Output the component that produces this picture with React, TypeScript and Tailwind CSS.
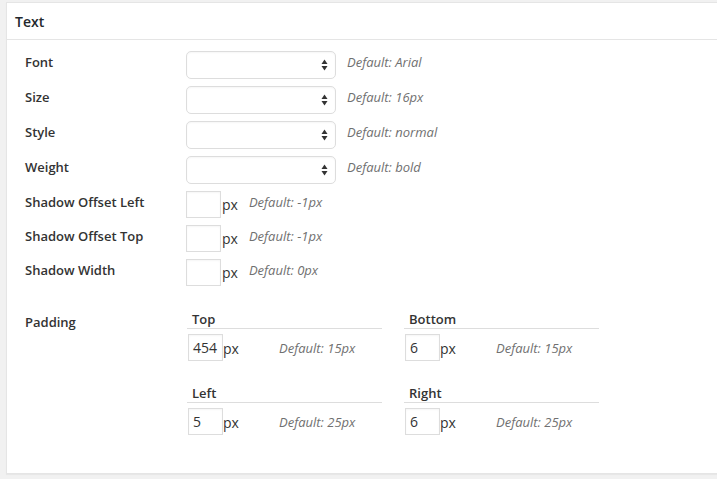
const font = { fontFamily: '"Open Sans", "Liberation Sans", sans-serif' };

function Arrows() {
  return (
    <svg width="7" height="12" viewBox="0 0 7 12" className="text-[#333]">
      <path d="M3.5 0.5 L6.5 5 L0.5 5 Z" fill="currentColor" />
      <path d="M3.5 11.5 L6.5 7 L0.5 7 Z" fill="currentColor" />
    </svg>
  );
}

function Hint({ children }: { children: string }) {
  return <span className="block text-[13px] italic text-[#707070] leading-[20px]">{children}</span>;
}

function SelectRow({ label, hint }: { label: string; hint: string }) {
  return (
    <div className="flex items-start mb-[7px]">
      <div className="w-[161px] pt-[1px] text-[13px] font-semibold text-[#333] leading-[20px]">{label}</div>
      <div className="w-[150px] h-[28px] border border-[#ddd] rounded-[5px] bg-white flex items-center justify-end pr-[7px] shadow-[inset_0_1px_2px_rgba(0,0,0,0.04)]">
        <Arrows />
      </div>
      <div className="ml-[11px] pt-[1px]">
        <Hint>{hint}</Hint>
      </div>
    </div>
  );
}

function PxRow({ label, hint }: { label: string; hint: string }) {
  return (
    <div className="flex items-start mb-[7px]">
      <div className="w-[161px] pt-[1px] text-[13px] font-semibold text-[#333] leading-[20px]">{label}</div>
      <div className="w-[35px] h-[27px] border border-[#ddd] bg-white shadow-[inset_0_1px_2px_rgba(0,0,0,0.04)]" />
      <span className="block ml-[1px] pt-[4px] text-[14px] text-[#333] leading-[20px]">px</span>
      <div className="ml-[11px] pt-[1px]">
        <Hint>{hint}</Hint>
      </div>
    </div>
  );
}

function PadField({ label, value, hint }: { label: string; value: string; hint: string }) {
  return (
    <div className="w-[195px]">
      <div className="h-[20px] border-b border-[#ddd] pl-[5px] text-[13px] font-semibold text-[#333] leading-[20px]">{label}</div>
      <div className="flex items-center mt-[5px]">
        <div className="w-[92px] flex items-center pl-[1px]">
          <div className="w-[35px] h-[27px] border border-[#ddd] bg-white pl-[4px] text-[14px] text-[#333] leading-[25px] shadow-[inset_0_1px_2px_rgba(0,0,0,0.04)]">
            {value}
          </div>
          <span className="block pt-[3px] text-[14px] text-[#333] leading-[20px]">px</span>
        </div>
        <Hint>{hint}</Hint>
      </div>
    </div>
  );
}

export default function App() {
  return (
    <div className="w-[717px] h-[479px] overflow-hidden bg-[#f1f1f1] pt-[2px] pl-[6px]" style={font}>
      <div className="w-[730px] h-[472px] bg-white border border-[#e5e5e5] shadow-[0_1px_1px_rgba(0,0,0,0.04)]">
        <div className="h-[37px] border-b border-[#e5e5e5] pl-[8px] flex items-center text-[14px] font-semibold text-[#23282d]">
          Text
        </div>
        <div className="pl-[18px] pt-[11px]">
          <SelectRow label="Font" hint="Default: Arial" />
          <SelectRow label="Size" hint="Default: 16px" />
          <SelectRow label="Style" hint="Default: normal" />
          <SelectRow label="Weight" hint="Default: bold" />
          <PxRow label="Shadow Offset Left" hint="Default: -1px" />
          <PxRow label="Shadow Offset Top" hint="Default: -1px" />
          <PxRow label="Shadow Width" hint="Default: 0px" />
          <div className="flex items-start mt-[23px]">
            <div className="w-[162px] pt-[3px] text-[13px] font-semibold text-[#333] leading-[20px]">Padding</div>
            <div className="grid grid-cols-[195px_195px] gap-x-[22px] gap-y-[22px]">
              <PadField label="Top" value="454" hint="Default: 15px" />
              <PadField label="Bottom" value="6" hint="Default: 15px" />
              <PadField label="Left" value="5" hint="Default: 25px" />
              <PadField label="Right" value="6" hint="Default: 25px" />
            </div>
          </div>
        </div>
      </div>
    </div>
  );
}
